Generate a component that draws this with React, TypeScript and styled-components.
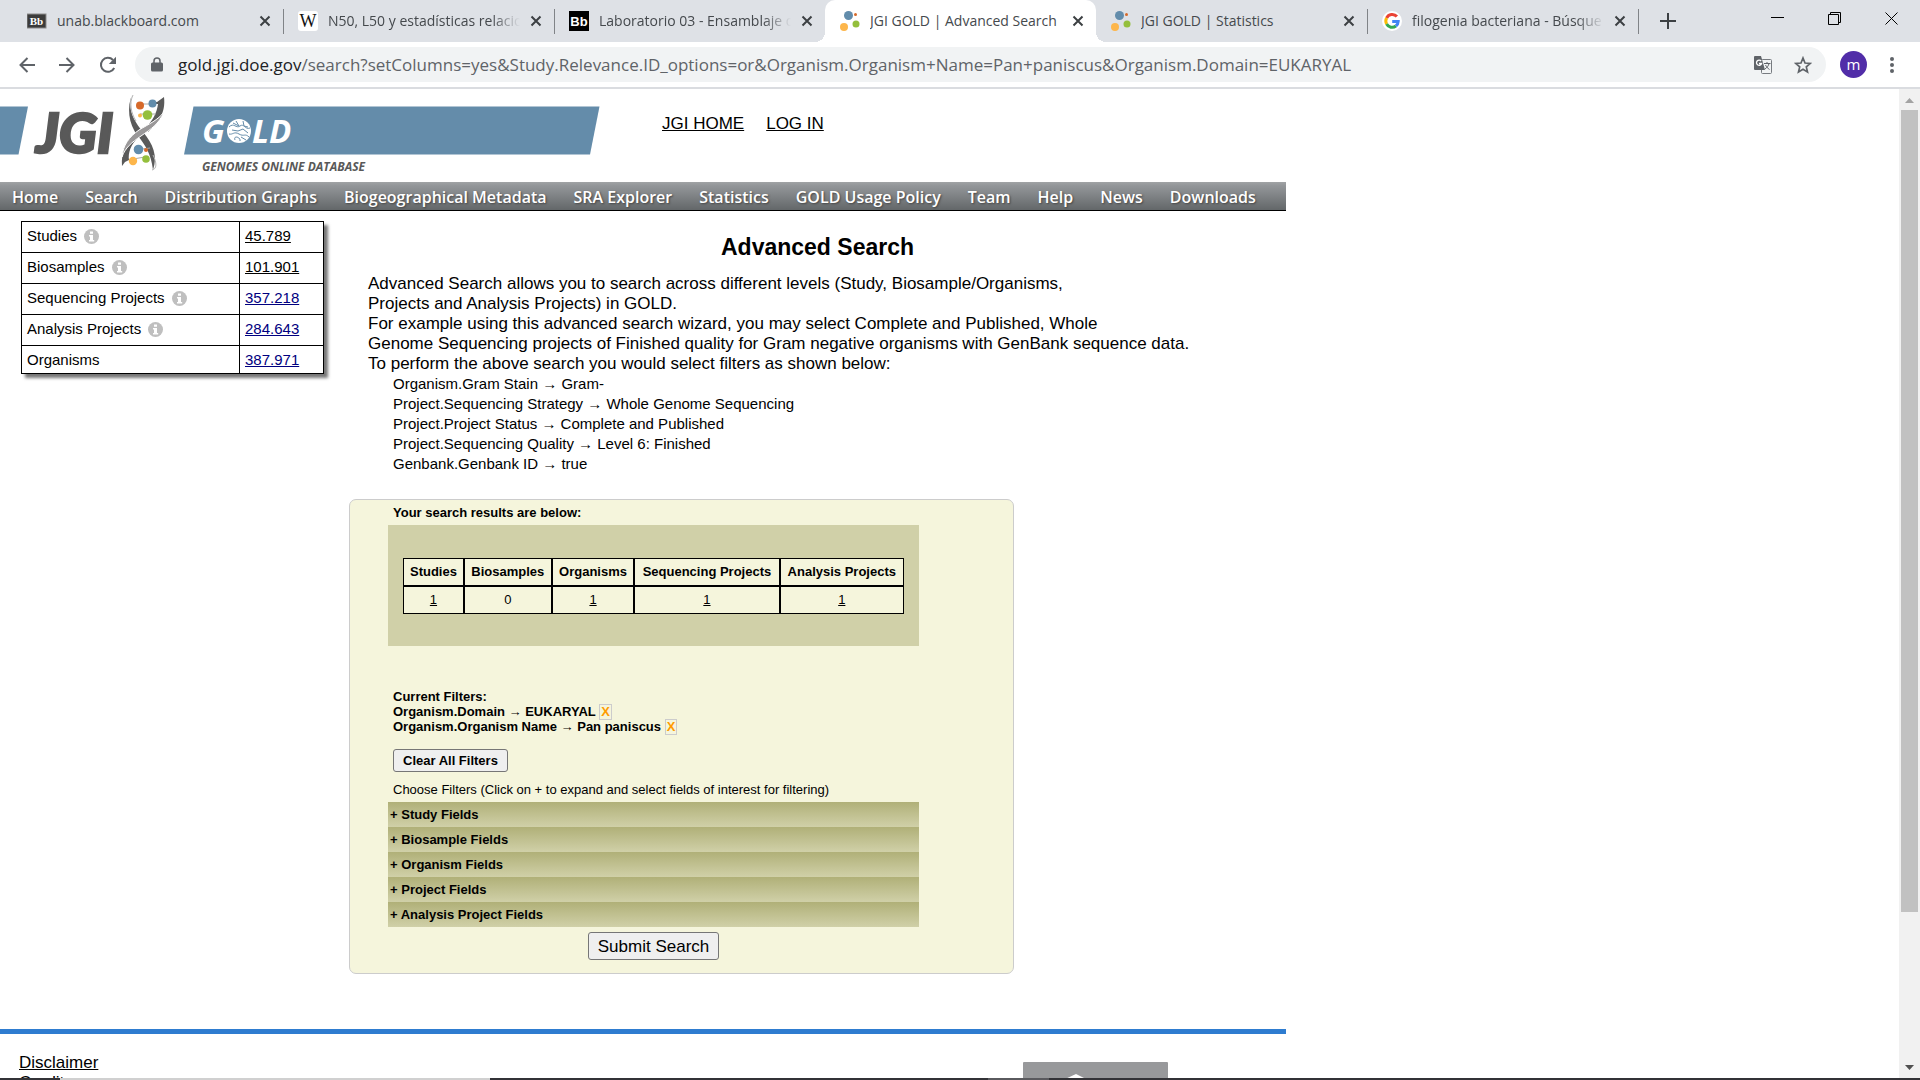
import React from "react";
import styled, { createGlobalStyle, css } from "styled-components";

const ui = `"Open Sans", "Noto Sans", sans-serif`;
const body = `"Liberation Sans", Arial, sans-serif`;

const GlobalStyle = createGlobalStyle`
  * { box-sizing: border-box; }
  body { margin: 0; background: #fff; color: #000; font-family: ${body}; }
  button { font: inherit; color: inherit; }
`;

const Window = styled.div`
  display: flex;
  flex-direction: column;
  height: 100vh;
  overflow: hidden;
`;

/* ---------- browser chrome ---------- */

const TabStrip = styled.div`
  display: flex;
  flex: none;
  height: 42px;
  padding-left: 12px;
  background: #dee1e6;
  font-family: ${ui};
`;

const Tab = styled.div<{ $active?: boolean; $divider?: boolean }>`
  position: relative;
  display: flex;
  align-items: center;
  flex: 0 1 271px;
  min-width: 0;
  padding: 0 12px 0 15px;
  color: #45494d;
  ${(p) =>
    p.$divider &&
    css`
      &::after {
        content: "";
        position: absolute;
        right: -1px;
        top: 9px;
        width: 1px;
        height: 25px;
        background: #808387;
      }
    `}
  ${(p) =>
    p.$active &&
    css`
      background: #fff;
      border-radius: 10px 10px 0 0;
      &::before,
      &::after {
        content: "";
        position: absolute;
        bottom: 0;
        width: 10px;
        height: 10px;
      }
      &::before {
        right: 100%;
        background: radial-gradient(circle at 0 0, transparent 10px, #fff 10px);
      }
      &::after {
        left: 100%;
        background: radial-gradient(circle at 100% 0, transparent 10px, #fff 10px);
      }
    `}
`;

const TabIcon = styled.svg`
  flex: none;
  width: 20px;
  height: 20px;
  margin-right: 10px;
`;

const TabTitle = styled.span<{ $fade?: boolean }>`
  flex: 1;
  min-width: 0;
  margin-right: 10px;
  overflow: hidden;
  white-space: nowrap;
  font-size: 14px;
  line-height: 20px;
  ${(p) =>
    p.$fade &&
    css`
      mask-image: linear-gradient(to right, #000 calc(100% - 28px), transparent);
    `}
`;

const IconButton = styled.button<{ $w: number }>`
  display: flex;
  flex: none;
  align-items: center;
  justify-content: center;
  width: ${(p) => p.$w}px;
  height: 36px;
  padding: 0;
  border: 0;
  background: none;
`;

const CloseButton = styled(IconButton)`
  height: 12px;
`;

const NewTab = styled(IconButton)`
  height: 42px;
  margin-left: 10px;
`;

const WindowControls = styled.div`
  display: flex;
  margin-left: auto;
`;

const Toolbar = styled.div`
  display: flex;
  flex: none;
  align-items: center;
  height: 47px;
  padding: 0 8px 0 7px;
  border-bottom: 2px solid #dadce0;
  background: #fff;
  font-family: ${ui};
`;

const AddressBar = styled.div`
  display: flex;
  flex: 1;
  align-items: center;
  min-width: 0;
  height: 35px;
  margin: 0 14px 0 7px;
  padding: 0 3px 0 16px;
  border-radius: 18px;
  background: #f1f3f4;
`;

const AddressText = styled.div`
  flex: 1;
  min-width: 0;
  margin-left: 15px;
  overflow: hidden;
  white-space: nowrap;
  font-size: 17px;
  line-height: 26px;
  color: #5f6368;
`;

const Host = styled.span`
  color: #202124;
`;

const Avatar = styled.button`
  width: 27px;
  height: 27px;
  margin-right: 5px;
  padding: 0;
  border: 0;
  border-radius: 50%;
  background: #512da8;
  color: #fff;
  font-size: 15px;
  line-height: 25px;
`;

/* ---------- viewport ---------- */

const Viewport = styled.div`
  display: flex;
  flex: 1;
  min-height: 0;
`;

const Page = styled.div`
  flex: 1;
  min-width: 0;
  overflow: hidden;
`;

const PageInner = styled.div`
  max-width: 1286px;
`;

const Scrollbar = styled.div`
  display: flex;
  flex: none;
  flex-direction: column;
  align-items: center;
  width: 21px;
  background: #f1f1f1;
`;

const ScrollArrow = styled.svg`
  flex: none;
  width: 21px;
  height: 21px;
`;

const Track = styled.div`
  display: grid;
  grid-template-rows: 802fr 145fr;
  flex: 1;
  width: 17px;
`;

const Thumb = styled.div`
  background: #c1c1c1;
`;

const Taskbar = styled.div`
  display: flex;
  flex: none;
  height: 2px;
  background: #333337;
`;

const TaskbarSegment = styled.div<{ $start: number; $w: number; $c: string }>`
  width: ${(p) => p.$w}px;
  margin-left: ${(p) => p.$start}px;
  background: ${(p) => p.$c};
`;

/* ---------- site header ---------- */

const Header = styled.header`
  display: flex;
`;

const Logo = styled.svg`
  display: block;
  flex: none;
  width: 600px;
  height: 93px;
`;

const TopLinks = styled.div`
  display: flex;
  gap: 22px;
  padding: 25px 0 0 62px;
  font-size: 17px;
  line-height: 20px;
`;

const Link = styled.a<{ $navy?: boolean }>`
  color: ${(p) => (p.$navy ? "#000080" : "#000")};
  text-decoration: underline;
`;

const Nav = styled.nav`
  display: flex;
  gap: 27px;
  height: 29px;
  padding-left: 12px;
  border-bottom: 1px solid #000;
  background: linear-gradient(#a1a3a5, #94979a 12%, #636769);
`;

const NavLink = styled.a`
  color: #fff;
  font-family: ${ui};
  font-size: 16px;
  font-weight: 600;
  line-height: 30px;
  text-decoration: none;
  text-shadow: 1px 1px 2px #444;
  white-space: nowrap;
`;

/* ---------- main content ---------- */

const Columns = styled.div`
  display: flex;
  align-items: flex-start;
`;

const Sidebar = styled.aside`
  flex: none;
  width: 349px;
  padding: 10px 0 0 21px;
`;

const StatsTable = styled.table`
  width: 303px;
  border-collapse: collapse;
  box-shadow: 4px 4px 3px #777;
  font-size: 15px;
  line-height: 20px;

  th,
  td {
    height: 31px;
    padding: 0 5px 2px;
    border: 1px solid #000;
    font-weight: normal;
    text-align: left;
    background: #fff;
  }
  td {
    width: 84px;
  }
  tr:last-child > * {
    height: 28px;
    padding-bottom: 0;
  }
`;

const InfoIcon = styled.svg`
  width: 15px;
  height: 15px;
  margin-left: 7px;
  vertical-align: -3px;
`;

const Main = styled.main`
  flex: 1;
  min-width: 0;
`;

const Title = styled.h1`
  margin: 21px 0 12px;
  font-size: 23px;
  line-height: 30px;
  text-align: center;
`;

const Intro = styled.p`
  margin: 0;
  padding-left: 19px;
  font-size: 17px;
  line-height: 20px;
`;

const Examples = styled.ul`
  margin: 0 0 25px;
  padding-left: 44px;
  list-style: none;
  font-size: 15px;
  line-height: 20px;
`;

const SearchForm = styled.form`
  max-width: 665px;
  padding: 5px 94px 13px 38px;
  border: 1px solid #ccc;
  border-radius: 7px;
  background: #f5f5dc;
  font-size: 13px;
  line-height: 15px;
`;

const FormText = styled.p<{ $bold?: boolean }>`
  margin: 0;
  padding-left: 5px;
  font-weight: ${(p) => (p.$bold ? "bold" : "normal")};
`;

const Results = styled.div`
  margin: 5px 0 43px;
  padding: 33px 15px 32px;
  background: #d0d0a8;
`;

const ResultsTable = styled.table`
  width: 100%;
  border-spacing: 0;
  border: 0;
  text-align: center;

  th,
  td {
    height: 28px;
    padding: 0 5px 2px;
    border: 1px solid #000;
    background: #f5f5dc;
    white-space: nowrap;
  }
`;

const FilterRemove = styled.button`
  height: 16px;
  padding: 0 1px;
  border: 1px solid #ccc;
  background: #f5f5dc;
  color: #ff9c00;
  font-weight: bold;
  line-height: 14px;
  vertical-align: top;
`;

const FilterRow = styled.div`
  height: 15px;
  padding-left: 5px;
  font-weight: bold;
`;

const PushButton = styled.button<{ $large?: boolean }>`
  height: ${(p) => (p.$large ? 28 : 23)}px;
  padding: 0 9px;
  border: 1px solid #767676;
  border-radius: 3px;
  background: #efefef;
  font-size: ${(p) => (p.$large ? 17 : 13)}px;
  font-weight: ${(p) => (p.$large ? "normal" : "bold")};
`;

const ClearRow = styled.div`
  padding: 15px 0 10px 5px;
`;

const FieldGroups = styled.div`
  margin-top: 5px;
`;

const FieldGroup = styled.button`
  display: block;
  width: 100%;
  height: 25px;
  padding: 0 2px;
  border: 0;
  background: linear-gradient(#b0b078, #d0d0a8);
  font-weight: bold;
  text-align: left;
`;

const SubmitRow = styled.div`
  padding-top: 5px;
  text-align: center;
`;

const Footer = styled.footer`
  display: flex;
  justify-content: space-between;
  margin-top: 55px;
  padding: 19px 118px 0 19px;
  border-top: 5px solid #2e7cd0;
  font-size: 17px;
  line-height: 20px;
`;

const FooterLinks = styled.div`
  display: flex;
  flex-direction: column;
  align-items: flex-start;
`;

const FooterLogo = styled.svg`
  flex: none;
  width: 145px;
  height: 60px;
  margin-top: 9px;
`;

/* ---------- icons ---------- */

const JgiMark = () => (
  <>
    <circle cx="8.500" cy="4.500" r="4.500" fill="#628cab" />
    <circle cx="15.500" cy="3.500" r="1.500" fill="#d6692a" />
    <circle cx="4" cy="16" r="4" fill="#fdb64b" />
    <circle cx="16" cy="13" r="3.500" fill="#94bf3c" />
  </>
);

const icons: Record<string, React.ReactNode> = {
  bbGray: (
    <>
      <rect y="3" width="19" height="14" fill="#3b3b3b" stroke="#8b8b8b" />
      <text x="9.500" y="14" fill="#fff" fontFamily="Liberation Serif, serif" fontWeight="bold" fontSize="11" textAnchor="middle">Bb</text>
    </>
  ),
  wiki: (
    <>
      <rect width="20" height="20" rx="3" fill="#fff" />
      <text x="10" y="16" fill="#111" fontFamily="Liberation Serif, serif" fontSize="18" textAnchor="middle">W</text>
    </>
  ),
  bb: (
    <>
      <rect width="20" height="20" fill="#000" />
      <text x="10" y="14.500" fill="#fff" fontFamily="Liberation Sans, sans-serif" fontWeight="bold" fontSize="13" textAnchor="middle">Bb</text>
    </>
  ),
  jgi: <JgiMark />,
  google: (
    <>
      <circle cx="10" cy="10" r="10" fill="#fff" />
      <g fill="none" strokeWidth="3">
        <path d="M14.900 5.600A6.200 6.200 0 0 0 4.600 7" stroke="#ea4335" />
        <path d="M4.600 7a6.200 6.200 0 0 0 0 6" stroke="#fbbc05" />
        <path d="M4.600 13a6.200 6.200 0 0 0 9.300 2" stroke="#34a853" />
        <path d="M13.900 15a6.200 6.200 0 0 0 2.300-4.600H10.200" stroke="#4285f4" />
      </g>
    </>
  ),
};

const CloseIcon = () => (
  <svg width="12" height="12" viewBox="0 0 12 12" stroke="#3c4043" strokeWidth="2">
    <path d="M1.500 1.500l9 9M10.500 1.500l-9 9" />
  </svg>
);

const InfoGlyph = () => (
  <InfoIcon viewBox="0 0 15 15" role="img" aria-label="Info">
    <circle cx="7.500" cy="7.500" r="7.500" fill="#bfbfbf" />
    <path d="M6 2.500h3v2.200H6zM5 6h4v5h1.200v1.500H5V11h1V7.500H5z" fill="#fff" />
  </InfoIcon>
);

const SiteLogo = () => (
  <Logo viewBox="0 0 600 93" role="img" aria-label="JGI GOLD Genomes Online Database">
    <path d="M0 17.500H28L18.500 65.500H0z" fill="#648caa" />
    <path d="M193.500 17.500H599.500L590 65.500H184z" fill="#648caa" />
    <text x="36" y="63.500" fill="#595959" stroke="#595959" strokeWidth="2.500" fontFamily="Lato, sans-serif" fontWeight="900" fontStyle="italic" fontSize="56">JGI</text>
    {/* back strand */}
    <path d="M132 6C127 20 134 32 143 43C153 55 158 67 153 81C151 64 145 56 138 47C128 35 127 17 132 6z" fill="#5a5a5a" />
    <path d="M133 6C129 14 131 24 136 32M153 66C157 74 157 80 152 81" fill="none" stroke="#b5b5b5" strokeWidth="1" />
    <path d="M164 8C166 24 158 34 148 43L145 39C153 32 157 23 158 15L150 15V13H157z" fill="#5a5a5a" />
    <path d="M122 77C121 63 126 52 136 43L140 47C130 55 128 65 129 71L125 73z" fill="#5a5a5a" />
    {/* front strand */}
    <path d="M164 23C159 35 151 40 141 47C132 53 125 59 122 68C123 56 129 48 139 41C149 35 158 31 164 23z" fill="#9a9899" stroke="#fff" strokeWidth="1" />
    <path d="M140 15H152M140 25H156M133 70L145 68M134 61L150 59" stroke="#aaa" strokeWidth="1" />
    <circle cx="140" cy="16.500" r="4" fill="#d6692a" />
    <circle cx="152.500" cy="14.500" r="4" fill="#628cab" />
    <circle cx="140" cy="26.500" r="2" fill="#fdb64b" />
    <circle cx="147.500" cy="26" r="4.800" fill="#94bf3c" />
    <circle cx="138.500" cy="60.500" r="4.800" fill="#628cab" />
    <circle cx="146" cy="61" r="2" fill="#d6692a" />
    <circle cx="133" cy="72" r="4.200" fill="#fdb64b" />
    <circle cx="146" cy="70" r="3.800" fill="#94bf3c" />
    <g fill="#fff" fontFamily="Open Sans, sans-serif" fontWeight="700" fontStyle="italic" fontSize="33">
      <text x="202" y="53.500">G</text>
      <text x="252" y="53.500">LD</text>
    </g>
    <circle cx="239" cy="42" r="12" fill="#fff" />
    <g fill="none" stroke="#648caa" strokeWidth="1">
      <path d="M229 38c5-5 7 2 11-1s5 4 10 2M229 45c4 1 5-3 10 0s6-1 10 3M233 34l6 3-3-5M235 51c-2-5 6-3 5 1M243 32l1 5 4 1M241 48l5 3M232 41l6 1 5-2 5 4" />
    </g>
    <text x="202" y="81.500" fill="#595959" fontFamily="Open Sans, sans-serif" fontWeight="700" fontStyle="italic" fontSize="12">GENOMES ONLINE DATABASE</text>
  </Logo>
);

/* ---------- data ---------- */

const tabs = [
  { icon: "bbGray", title: "unab.blackboard.com", divider: true },
  { icon: "wiki", title: "N50, L50 y estadísticas relacio", divider: true, fade: true },
  { icon: "bb", title: "Laboratorio 03 - Ensamblaje d", fade: true },
  { icon: "jgi", title: "JGI GOLD | Advanced Search", active: true },
  { icon: "jgi", title: "JGI GOLD | Statistics", divider: true },
  { icon: "google", title: "filogenia bacteriana - Búsque", divider: true, fade: true },
];

const navItems = [
  "Home", "Search", "Distribution Graphs", "Biogeographical Metadata", "SRA Explorer",
  "Statistics", "GOLD Usage Policy", "Team", "Help", "News", "Downloads",
];

const stats = [
  { label: "Studies", value: "45.789", info: true },
  { label: "Biosamples", value: "101.901", info: true },
  { label: "Sequencing Projects", value: "357.218", info: true, navy: true },
  { label: "Analysis Projects", value: "284.643", info: true, navy: true },
  { label: "Organisms", value: "387.971", navy: true },
];

const examples = [
  "Organism.Gram Stain → Gram-",
  "Project.Sequencing Strategy → Whole Genome Sequencing",
  "Project.Project Status → Complete and Published",
  "Project.Sequencing Quality → Level 6: Finished",
  "Genbank.Genbank ID → true",
];

const results = [
  { name: "Studies", count: 1 },
  { name: "Biosamples", count: 0 },
  { name: "Organisms", count: 1 },
  { name: "Sequencing Projects", count: 1 },
  { name: "Analysis Projects", count: 1 },
];

const filters = ["Organism.Domain → EUKARYAL", "Organism.Organism Name → Pan paniscus"];

const fieldGroups = ["Study Fields", "Biosample Fields", "Organism Fields", "Project Fields", "Analysis Project Fields"];

export default function App() {
  return (
    <Window>
      <GlobalStyle />
      <TabStrip>
        {tabs.map((t) => (
          <Tab key={t.title} $active={t.active} $divider={t.divider}>
            <TabIcon viewBox="0 0 20 20">{icons[t.icon]}</TabIcon>
            <TabTitle $fade={t.fade}>{t.title}</TabTitle>
            <CloseButton $w={12} aria-label="Close tab"><CloseIcon /></CloseButton>
          </Tab>
        ))}
        <NewTab $w={40} aria-label="New tab">
          <svg width="16" height="16" stroke="#3c4043" strokeWidth="2"><path d="M8 0v16M0 8h16" /></svg>
        </NewTab>
        <WindowControls>
          <IconButton $w={57} aria-label="Minimize">
            <svg width="13" height="13" stroke="#000"><path d="M0 5.500h13" /></svg>
          </IconButton>
          <IconButton $w={57} aria-label="Restore">
            <svg width="13" height="13" fill="none" stroke="#000"><path d="M.5 2.500h10v10H.5zM2.500 2.500v-2h10v10h-2" /></svg>
          </IconButton>
          <IconButton $w={57} aria-label="Close window">
            <svg width="13" height="13" stroke="#000"><path d="M.5.5l12 12M12.500.5l-12 12" /></svg>
          </IconButton>
        </WindowControls>
      </TabStrip>

      <Toolbar>
        <IconButton $w={40} aria-label="Back">
          <svg width="16" height="16" fill="none" stroke="#5f6368" strokeWidth="2"><path d="M16 8H1.500M8.500 1L1.500 8l7 7" /></svg>
        </IconButton>
        <IconButton $w={40} aria-label="Forward">
          <svg width="16" height="16" fill="none" stroke="#5f6368" strokeWidth="2"><path d="M0 8h14.500M7.500 1l7 7-7 7" /></svg>
        </IconButton>
        <IconButton $w={41} aria-label="Reload">
          <svg width="18" height="18" fill="none" stroke="#5f6368" strokeWidth="2">
            <path d="M15.200 12A7 7 0 1 1 14 4" />
            <path d="M17 .8V8H9.800z" fill="#5f6368" stroke="none" />
          </svg>
        </IconButton>
        <AddressBar>
          <svg width="12" height="16" fill="#5f6368">
            <path d="M1.500 5.500h9A1.500 1.500 0 0 1 12 7v6a1.500 1.500 0 0 1-1.500 1.500h-9A1.500 1.500 0 0 1 0 13V7a1.500 1.500 0 0 1 1.500-1.500z" />
            <path d="M3 6V4a3 3 0 0 1 6 0v2" fill="none" stroke="#5f6368" strokeWidth="1.500" />
          </svg>
          <AddressText>
            <Host>gold.jgi.doe.gov</Host>/search?setColumns=yes&amp;Study.Relevance.ID_options=or&amp;Organism.Organism+Name=Pan+paniscus&amp;Organism.Domain=EUKARYAL
          </AddressText>
          <IconButton $w={40} aria-label="Translate this page">
            <svg width="18" height="18">
              <rect x="7.500" y="3.500" width="10" height="14" rx="1" fill="#f1f3f4" stroke="#777b80" />
              <path d="M1 0h6l4 14H1a1 1 0 0 1-1-1V1a1 1 0 0 1 1-1z" fill="#5f6368" />
              <path d="M7.200 5.200A2.600 2.600 0 1 0 7.600 7.500H5" fill="none" stroke="#fff" strokeWidth="1.300" />
              <path d="M10 7.500h6.500M13 6v1.500M15 7.500c-.5 2.500-2 4-4 5.500M11.500 9c1 2 2 3 4 4.500" fill="none" stroke="#5f6368" />
            </svg>
          </IconButton>
          <IconButton $w={40} aria-label="Bookmark this tab">
            <svg width="18" height="18" viewBox="0 0 18 18" fill="none" stroke="#5f6368" strokeWidth="1.700">
              <path d="M9 2l2 5 5.300.4-4 3.500 1.200 5.100L9 13.300 4.500 16l1.200-5.100-4-3.500L7 7z" />
            </svg>
          </IconButton>
        </AddressBar>
        <Avatar aria-label="Profile">m</Avatar>
        <IconButton $w={40} aria-label="Menu">
          <svg width="4" height="18" fill="#5f6368"><circle cx="2" cy="3" r="2" /><circle cx="2" cy="9" r="2" /><circle cx="2" cy="15" r="2" /></svg>
        </IconButton>
      </Toolbar>

      <Viewport>
        <Page>
          <PageInner>
            <Header>
              <SiteLogo />
              <TopLinks>
                <Link href="#home">JGI HOME</Link>
                <Link href="#login">LOG IN</Link>
              </TopLinks>
            </Header>
            <Nav>
              {navItems.map((n) => <NavLink key={n} href="#nav">{n}</NavLink>)}
            </Nav>
            <Columns>
              <Sidebar>
                <StatsTable>
                  <tbody>
                    {stats.map((s) => (
                      <tr key={s.label}>
                        <th scope="row">{s.label}{s.info && <InfoGlyph />}</th>
                        <td><Link href="#stats" $navy={s.navy}>{s.value}</Link></td>
                      </tr>
                    ))}
                  </tbody>
                </StatsTable>
              </Sidebar>
              <Main>
                <Title>Advanced Search</Title>
                <Intro>
                  Advanced Search allows you to search across different levels (Study, Biosample/Organisms,<br />
                  Projects and Analysis Projects) in GOLD.<br />
                  For example using this advanced search wizard, you may select Complete and Published, Whole<br />
                  Genome Sequencing projects of Finished quality for Gram negative organisms with GenBank sequence data.<br />
                  To perform the above search you would select filters as shown below:
                </Intro>
                <Examples>
                  {examples.map((e) => <li key={e}>{e}</li>)}
                </Examples>
                <SearchForm onSubmit={(e) => e.preventDefault()}>
                  <FormText $bold>Your search results are below:</FormText>
                  <Results>
                    <ResultsTable>
                      <thead>
                        <tr>{results.map((r) => <th key={r.name} scope="col">{r.name}</th>)}</tr>
                      </thead>
                      <tbody>
                        <tr>
                          {results.map((r) => (
                            <td key={r.name}>{r.count ? <Link href="#results">{r.count}</Link> : r.count}</td>
                          ))}
                        </tr>
                      </tbody>
                    </ResultsTable>
                  </Results>
                  <FormText $bold>Current Filters:</FormText>
                  {filters.map((f) => (
                    <FilterRow key={f}>
                      {f} <FilterRemove type="button" aria-label={`Remove ${f}`}>X</FilterRemove>
                    </FilterRow>
                  ))}
                  <ClearRow><PushButton type="button">Clear All Filters</PushButton></ClearRow>
                  <FormText>Choose Filters (Click on + to expand and select fields of interest for filtering)</FormText>
                  <FieldGroups>
                    {fieldGroups.map((g) => <FieldGroup key={g} type="button">+ {g}</FieldGroup>)}
                  </FieldGroups>
                  <SubmitRow><PushButton $large type="submit">Submit Search</PushButton></SubmitRow>
                </SearchForm>
              </Main>
            </Columns>
            <Footer>
              <FooterLinks>
                <Link href="#disclaimer">Disclaimer</Link>
                <Link href="#credits">Credits</Link>
              </FooterLinks>
              <FooterLogo viewBox="0 0 145 60">
                <rect width="145" height="60" rx="1" fill="#98999b" />
                <path d="M40 18L53 12l12 6v20H40z" fill="#fff" />
              </FooterLogo>
            </Footer>
          </PageInner>
        </Page>
        <Scrollbar>
          <ScrollArrow><path d="M6 14h9l-4.500-5z" fill="#a3a3a3" /></ScrollArrow>
          <Track><Thumb /></Track>
          <ScrollArrow><path d="M6 8h9l-4.500 5z" fill="#505050" /></ScrollArrow>
        </Scrollbar>
      </Viewport>
      <Taskbar>
        <TaskbarSegment $start={60} $w={430} $c="#d0d0d0" />
        <TaskbarSegment $start={498} $w={61} $c="#5a5a5e" />
      </Taskbar>
    </Window>
  );
}
